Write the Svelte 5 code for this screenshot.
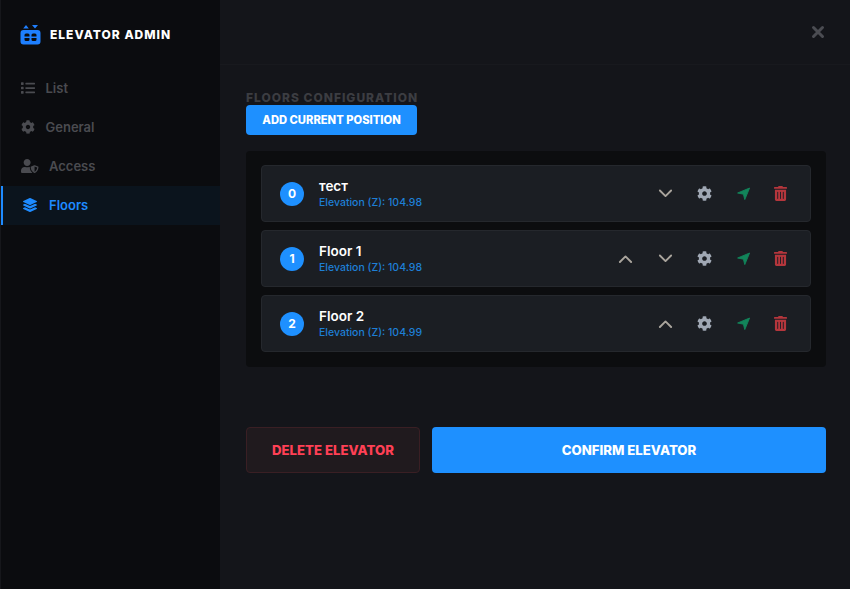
<script>
	const gear =
		'M487.4 315.7l-42.6-24.6c4.3-23.2 4.3-47 0-70.2l42.6-24.6c4.9-2.8 7.1-8.6 5.5-14-11.1-35.6-30-67.8-54.7-94.6-3.8-4.1-10-5.1-14.8-2.3L380.8 110c-17.9-15.4-38.5-27.3-60.8-35.1V25.8c0-5.6-3.9-10.5-9.4-11.7-36.7-8.2-74.3-7.8-109.2 0-5.5 1.2-9.4 6.1-9.4 11.7V75c-22.2 7.9-42.8 19.8-60.8 35.1L88.7 85.5c-4.9-2.8-11-1.9-14.8 2.3-24.7 26.7-43.6 58.9-54.7 94.6-1.7 5.4.6 11.2 5.5 14L67.3 221c-4.3 23.2-4.3 47 0 70.2l-42.6 24.6c-4.9 2.8-7.1 8.6-5.5 14 11.1 35.6 30 67.8 54.7 94.6 3.8 4.1 10 5.1 14.8 2.3l42.6-24.6c17.9 15.4 38.5 27.3 60.8 35.1v49.2c0 5.6 3.9 10.5 9.4 11.7 36.7 8.2 74.3 7.8 109.2 0 5.5-1.2 9.4-6.1 9.4-11.7v-49.2c22.2-7.9 42.8-19.8 60.8-35.1l42.6 24.6c4.9 2.8 11 1.9 14.8-2.3 24.7-26.7 43.6-58.9 54.7-94.6 1.5-5.5-.7-11.3-5.6-14.1zM256 336c-44.1 0-80-35.9-80-80s35.9-80 80-80 80 35.9 80 80-35.9 80-80 80z';
	const list =
		'M80 368H16a16 16 0 0 0-16 16v64a16 16 0 0 0 16 16h64a16 16 0 0 0 16-16v-64a16 16 0 0 0-16-16zm0-320H16A16 16 0 0 0 0 64v64a16 16 0 0 0 16 16h64a16 16 0 0 0 16-16V64a16 16 0 0 0-16-16zm0 160H16a16 16 0 0 0-16 16v64a16 16 0 0 0 16 16h64a16 16 0 0 0 16-16v-64a16 16 0 0 0-16-16zm416 176H176a16 16 0 0 0-16 16v32a16 16 0 0 0 16 16h320a16 16 0 0 0 16-16v-32a16 16 0 0 0-16-16zm0-320H176a16 16 0 0 0-16 16v32a16 16 0 0 0 16 16h320a16 16 0 0 0 16-16V80a16 16 0 0 0-16-16zm0 160H176a16 16 0 0 0-16 16v32a16 16 0 0 0 16 16h320a16 16 0 0 0 16-16v-32a16 16 0 0 0-16-16z';
	const userShield =
		'M622.3 271.1l-115.2-45c-4.1-1.6-12.6-3.7-22.2 0l-115.2 45c-10.7 4.2-17.7 14-17.7 24.9 0 111.6 68.7 188.8 132.9 213.9 9.6 3.7 18 1.6 22.2 0C558.4 489.9 640 420.5 640 296c0-10.9-7-20.7-17.7-24.9zM496 462.4V273.3l95.5 37.3c-5.6 87.1-60.9 135.4-95.5 151.8zM224 256c70.7 0 128-57.3 128-128S294.7 0 224 0 96 57.3 96 128s57.3 128 128 128zm96 40c0-2.5.8-4.8 1.1-7.2-2.5-.1-4.9-.8-7.5-.8h-16.7c-22.2 10.2-46.9 16-72.9 16s-50.6-5.8-72.9-16h-16.7C60.2 288 0 348.2 0 422.4V464c0 26.5 21.5 48 48 48h352c6.8 0 13.3-1.5 19.2-4-54-42.9-99.2-116.7-99.2-212z';
	const layers =
		'M12.41 148.02l232.94 105.67c6.8 3.09 14.49 3.09 21.29 0l232.94-105.67c16.55-7.51 16.55-32.52 0-40.03L266.65 2.31a25.607 25.607 0 0 0-21.29 0L12.41 107.98c-16.55 7.51-16.55 32.53 0 40.04zm487.18 88.28l-58.09-26.33-161.64 73.27c-7.56 3.43-15.59 5.17-23.86 5.17s-16.29-1.74-23.86-5.17L70.51 209.97l-58.1 26.33c-16.55 7.5-16.55 32.5 0 40l232.94 105.59c6.8 3.08 14.49 3.08 21.29 0L499.59 276.3c16.55-7.5 16.55-32.5 0-40zm0 127.8l-57.87-26.23-161.86 73.37c-7.56 3.43-15.59 5.17-23.86 5.17s-16.29-1.74-23.86-5.17L70.29 337.87 12.41 364.1c-16.55 7.5-16.55 32.5 0 40l232.94 105.59c6.8 3.08 14.49 3.08 21.29 0L499.59 404.1c16.55-7.5 16.55-32.5 0-40z';
	const trash =
		'M32 464a48 48 0 0 0 48 48h288a48 48 0 0 0 48-48V128H32zm272-256a16 16 0 0 1 32 0v224a16 16 0 0 1-32 0zm-96 0a16 16 0 0 1 32 0v224a16 16 0 0 1-32 0zm-96 0a16 16 0 0 1 32 0v224a16 16 0 0 1-32 0zM432 32H312l-9.4-18.7A24 24 0 0 0 281.1 0H166.8a23.72 23.72 0 0 0-21.4 13.3L136 32H16A16 16 0 0 0 0 48v32a16 16 0 0 0 16 16h416a16 16 0 0 0 16-16V48a16 16 0 0 0-16-16z';

	const nav = [
		{ label: 'List', d: list, w: 512 },
		{ label: 'General', d: gear, w: 512 },
		{ label: 'Access', d: userShield, w: 640 },
		{ label: 'Floors', d: layers, w: 512, active: true }
	];

	const floors = [
		{ id: 0, name: 'тест', z: '104.98', up: false, down: true },
		{ id: 1, name: 'Floor 1', z: '104.98', up: true, down: true },
		{ id: 2, name: 'Floor 2', z: '104.99', up: true, down: false }
	];
</script>

<div class="app">
	<aside class="sidebar">
		<div class="brand">
			<svg class="logo" viewBox="0 0 21 20" width="21" height="20">
				<path d="M3.2 3.5 6 0 8.8 3.5z M12 0h6L15 3.5z" fill="#1e7fff" />
				<path
					fill-rule="evenodd"
					fill="#1e7fff"
					d="M3.5 5h14a3 3 0 0 1 3 3v8.5a3 3 0 0 1-3 3h-14a3 3 0 0 1-3-3V8a3 3 0 0 1 3-3zM6 8.5a1.5 1.5 0 0 0-1.5 1.5v1.5h5V10A1.5 1.5 0 0 0 8 8.5zM13 8.5a1.5 1.5 0 0 0-1.5 1.5v1.5h5V10A1.5 1.5 0 0 0 15 8.5zM4.5 13v1.5A1.5 1.5 0 0 0 6 16h2a1.5 1.5 0 0 0 1.5-1.5V13zM11.5 13v1.5A1.5 1.5 0 0 0 13 16h2a1.5 1.5 0 0 0 1.5-1.5V13z"
				/>
			</svg>
			<span>ELEVATOR ADMIN</span>
		</div>
		<nav>
			{#each nav as item}
				<div class="nav-item" class:active={item.active}>
					<svg viewBox="0 0 {item.w} 512" height="14" width={(item.w / 512) * 14}>
						<path d={item.d} fill="currentColor" />
					</svg>
					<span>{item.label}</span>
				</div>
			{/each}
		</nav>
	</aside>

	<main class="main">
		<header class="topbar">
			<svg class="close" viewBox="0 0 14 14" width="14" height="14">
				<path d="M2.5 2.5 11.5 11.5M11.5 2.5 2.5 11.5" stroke="currentColor" stroke-width="3" stroke-linecap="round" />
			</svg>
		</header>

		<section class="content">
			<h2>FLOORS CONFIGURATION</h2>
			<button class="add">ADD CURRENT POSITION</button>

			<div class="panel">
				{#each floors as floor}
					<div class="row">
						<div class="num">{floor.id}</div>
						<div class="info">
							<div class="name">{floor.name}</div>
							<div class="elev">Elevation (Z): {floor.z}</div>
						</div>
						<div class="actions">
							{#if floor.up}
								<button class="act chev">
									<svg viewBox="0 0 16 10" width="15" height="9.5">
										<path d="M2 8.5 8 2.5l6 6" fill="none" stroke="currentColor" stroke-width="2" stroke-linecap="round" stroke-linejoin="round" />
									</svg>
								</button>
							{/if}
							{#if floor.down}
								<button class="act chev">
									<svg viewBox="0 0 16 10" width="15" height="9.5">
										<path d="M2 1.5 8 7.5l6-6" fill="none" stroke="currentColor" stroke-width="2" stroke-linecap="round" stroke-linejoin="round" />
									</svg>
								</button>
							{/if}
							<button class="act cog">
								<svg viewBox="0 0 512 512" width="15" height="15"><path d={gear} fill="currentColor" /></svg>
							</button>
							<button class="act go">
								<svg viewBox="0 0 13 13" width="13" height="13">
									<path d="M0.6 6 12.6 1 7.8 12.6 6.4 7.2z" fill="currentColor" stroke="currentColor" stroke-width="0.9" stroke-linejoin="round" />
								</svg>
							</button>
							<button class="act del">
								<svg viewBox="0 0 448 512" width="13" height="15"><path d={trash} fill="currentColor" /></svg>
							</button>
						</div>
					</div>
				{/each}
			</div>

			<div class="footer">
				<button class="delete">DELETE ELEVATOR</button>
				<button class="confirm">CONFIRM ELEVATOR</button>
			</div>
		</section>
	</main>
</div>

<style>
	:global(body) {
		margin: 0;
		background: #14151a;
	}
	.app {
		display: flex;
		width: 850px;
		height: 589px;
		overflow: hidden;
		font-family: Inter, 'Noto Sans', sans-serif;
		background: #14151a;
		color: #fff;
	}
	.sidebar {
		width: 219px;
		flex: none;
		background: #0b0c0f;
		border-left: 1px solid #16171b;
	}
	.brand {
		height: 68px;
		display: flex;
		align-items: center;
		gap: 9px;
		padding-left: 19px;
		font-size: 12px;
		font-weight: 800;
		letter-spacing: 1px;
	}
	.logo {
		flex: none;
		margin-top: 1px;
	}
	nav {
		padding-top: 1px;
	}
	.nav-item {
		height: 39px;
		box-sizing: border-box;
		padding: 0 0 2px 20px;
		display: flex;
		align-items: center;
		gap: 10.5px;
		font-size: 13px;
		font-weight: 600;
		color: #4a4b50;
	}
	.nav-item.active {
		color: #1e8bff;
		background: #0b141d;
		border-left: 2px solid #1e8bff;
		gap: 12px;
	}
	.nav-item svg {
		flex: none;
	}
	.main {
		flex: 1;
		min-width: 0;
	}
	.topbar {
		height: 64px;
		display: flex;
		align-items: center;
		justify-content: flex-end;
		padding-right: 25px;
		border-bottom: 1px solid #18191e;
	}
	.close {
		color: #4b4c52;
	}
	.content {
		padding: 26px 24px 0 26px;
	}
	h2 {
		margin: 0;
		height: 14px;
		line-height: 14px;
		font-size: 12px;
		font-weight: 800;
		letter-spacing: 1px;
		color: #3c3d42;
	}
	button {
		font-family: inherit;
		border: none;
		cursor: pointer;
	}
	.add {
		display: block;
		width: 171px;
		height: 30px;
		padding: 0;
		border-radius: 4px;
		background: #1e90ff;
		color: #fff;
		font-size: 11.2px;
		font-weight: 800;
	}
	.panel {
		margin-top: 16px;
		padding: 14px 15px 15px;
		border-radius: 4px;
		background: #0c0d0f;
		display: flex;
		flex-direction: column;
		gap: 8px;
	}
	.row {
		height: 57px;
		box-sizing: border-box;
		display: flex;
		align-items: center;
		padding: 0 11px 0 18px;
		background: #1b1e23;
		border: 1px solid #25282d;
		border-radius: 4px;
	}
	.num {
		width: 24px;
		height: 24px;
		flex: none;
		border-radius: 50%;
		background: #1e90ff;
		display: flex;
		align-items: center;
		justify-content: center;
		font-size: 12px;
		font-weight: 700;
	}
	.info {
		margin-left: 15px;
		padding-bottom: 1px;
		flex: 1;
	}
	.name {
		margin-bottom: 1px;
		font-size: 13.5px;
		font-weight: 600;
		line-height: 17px;
	}
	.elev {
		font-size: 10.5px;
		font-weight: 500;
		line-height: 13px;
		color: #1e7fd6;
	}
	.actions {
		display: flex;
		align-items: center;
	}
	.act {
		background: none;
		padding: 0 12px;
		display: flex;
		align-items: center;
	}
	.chev {
		width: 40px;
		padding: 0;
		justify-content: center;
		color: #aaa59d;
	}
	.cog {
		color: #a0a8b4;
	}
	.go {
		margin-left: 1px;
		color: #12855a;
	}
	.del {
		color: #b4363c;
	}
	.footer {
		margin-top: 60px;
		display: flex;
		gap: 12px;
	}
	.footer button {
		height: 46px;
		border-radius: 4px;
		font-size: 13.2px;
		font-weight: 800;
	}
	.delete {
		width: 174px;
		flex: none;
		box-sizing: border-box;
		background: #201a1e;
		border: 1px solid #3a1f24;
		color: #ff4055;
	}
	.confirm {
		flex: 1;
		background: #1e90ff;
		color: #fff;
	}
</style>
